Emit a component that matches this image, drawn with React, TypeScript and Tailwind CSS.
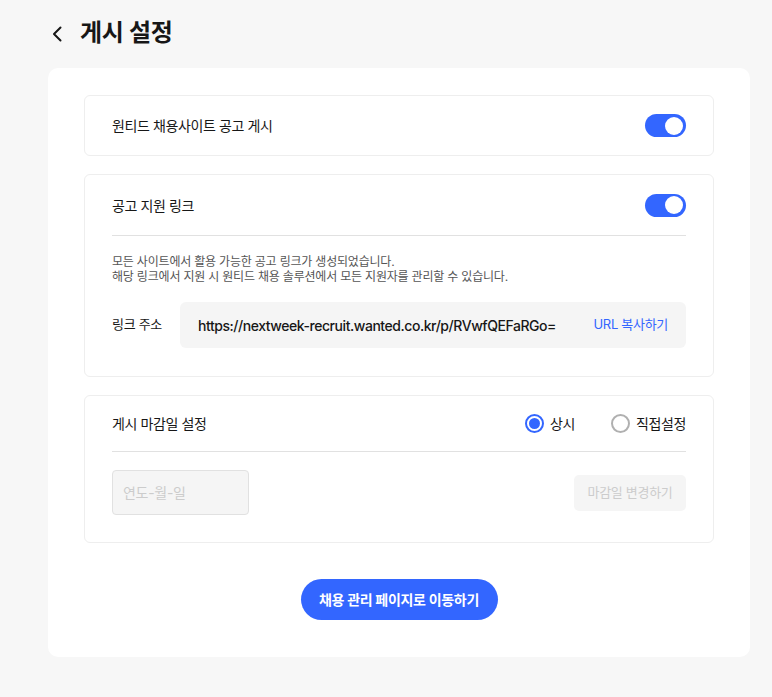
import React from "react";

function Toggle() {
  return (
    <div className="w-[41px] h-[23px] rounded-full bg-[#3366ff] flex items-center justify-end pr-[3px]">
      <div className="w-[18px] h-[18px] rounded-full bg-white" />
    </div>
  );
}

function Radio({ checked, label }: { checked: boolean; label: string }) {
  return (
    <label className="flex items-center gap-[6px] text-[14px] tracking-[-0.4px] text-[#171717]">
      {checked ? (
        <span className="w-[19px] h-[19px] rounded-full border-2 border-[#3366ff] flex items-center justify-center">
          <span className="w-[11px] h-[11px] rounded-full bg-[#3366ff]" />
        </span>
      ) : (
        <span className="w-[19px] h-[19px] rounded-full border-2 border-[#b0b0b0] bg-white" />
      )}
      {label}
    </label>
  );
}

export default function App() {
  return (
    <div
      className="min-h-[697px] bg-[#f7f7f7] pl-[48px] pr-[22px] pb-[40px] text-[#171717]"
      style={{ fontFamily: 'Inter, "Noto Sans CJK KR", sans-serif' }}
    >
      {/* header */}
      <div className="h-[68px] flex items-center gap-[14px] pl-[2px]">
        <svg width="16" height="18" viewBox="0 0 16 18" fill="none">
          <path d="M10.5 2.5 4 9l6.5 6.5" stroke="#171717" strokeWidth="2" strokeLinecap="round" strokeLinejoin="round" />
        </svg>
        <h1 className="text-[24px] font-bold tracking-[-0.3px] leading-none pb-[2px]">게시 설정</h1>
      </div>

      <div className="bg-white rounded-[10px] pt-[27px] pb-[37px] px-[36px] flex flex-col">
        {/* section 1 */}
        <div className="border border-[#eeeeee] rounded-[6px] h-[61px] px-[27px] flex items-center justify-between">
          <span className="text-[14px] tracking-[-0.4px]">원티드 채용사이트 공고 게시</span>
          <Toggle />
        </div>

        {/* section 2 */}
        <div className="mt-[18px] border border-[#eeeeee] rounded-[6px] px-[27px] pb-[28px]">
          <div className="h-[61px] flex items-center justify-between border-b border-[#e1e1e1]">
            <span className="text-[14px] tracking-[-0.4px]">공고 지원 링크</span>
            <Toggle />
          </div>
          <p className="mt-[18px] text-[12px] leading-[15px] tracking-[-0.2px] text-[#555555]">
            모든 사이트에서 활용 가능한 공고 링크가 생성되었습니다.
            <br />
            해당 링크에서 지원 시 원티드 채용 솔루션에서 모든 지원자를 관리할 수 있습니다.
          </p>
          <div className="mt-[18px] flex items-center">
            <span className="w-[68px] text-[13px] tracking-[-0.3px]">링크 주소</span>
            <div className="flex-1 h-[46px] rounded-[6px] bg-[#f5f5f5] pl-[18px] pr-[18px] flex items-center justify-between whitespace-nowrap">
              <span className="text-[14px] font-medium tracking-[-0.45px]">https://nextweek-recruit.wanted.co.kr/p/RVwfQEFaRGo=</span>
              <span className="text-[13px] tracking-[-0.3px] text-[#3366ff]">URL 복사하기</span>
            </div>
          </div>
        </div>

        {/* section 3 */}
        <div className="mt-[18px] border border-[#eeeeee] rounded-[6px] px-[27px] pb-[27px]">
          <div className="h-[56px] flex items-center justify-between border-b border-[#e1e1e1]">
            <span className="text-[14px] tracking-[-0.4px]">게시 마감일 설정</span>
            <div className="flex items-center gap-[36px]">
              <Radio checked label="상시" />
              <Radio checked={false} label="직접설정" />
            </div>
          </div>
          <div className="mt-[18px] flex items-center justify-between">
            <div className="w-[137px] h-[45px] rounded-[4px] border border-[#e1e1e1] bg-[#f5f5f5] px-[10px] flex items-center text-[14px] tracking-[-0.3px] text-[#cccccc]">
              연도-월-일
            </div>
            <button className="w-[112px] h-[36px] rounded-[5px] bg-[#f5f5f5] text-[13px] tracking-[-0.3px] text-[#cccccc]">
              마감일 변경하기
            </button>
          </div>
        </div>

        <div className="mt-[36px] flex justify-center">
          <button className="w-[197px] h-[41px] rounded-full bg-[#3366ff] text-white text-[14px] tracking-[-0.3px] font-bold">
            채용 관리 페이지로 이동하기
          </button>
        </div>
      </div>
    </div>
  );
}
